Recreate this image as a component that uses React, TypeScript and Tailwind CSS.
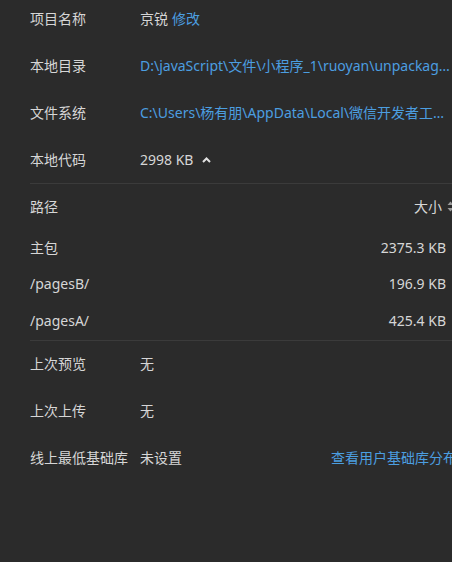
import React from "react";

const font = { fontFamily: '"Noto Sans", "Noto Sans CJK SC", sans-serif' };

function Row({ label, children }: { label: string; children?: React.ReactNode }) {
  return (
    <div className="flex h-[47px] items-center">
      <div className="w-[110px] shrink-0 text-[#d6d6d6]">{label}</div>
      <div className="flex min-w-0 flex-1 items-center">{children}</div>
    </div>
  );
}

function SizeRow({ path, size }: { path: string; size: string }) {
  return (
    <div className="flex h-[36.5px] items-center justify-between pr-[14px] text-[#d6d6d6]">
      <span>{path}</span>
      <span>{size}</span>
    </div>
  );
}

export default function App() {
  return (
    <div className="h-[562px] w-[452px] overflow-hidden bg-[#2b2b2b] text-[14px]" style={font}>
      <div className="-mt-[5px] w-[460px] pl-[30px]">
        <Row label="项目名称">
          <span className="text-[#d6d6d6]">京锐</span>
          <span className="ml-[4px] text-[#4c9ee0]">修改</span>
        </Row>
        <Row label="本地目录">
          <span className="block w-[311px] truncate text-[#4c9ee0]">
            D:\javaScript\文件\小程序_1\ruoyan\unpackage\dist\dev\mp-weixin
          </span>
        </Row>
        <Row label="文件系统">
          <span className="block w-[305px] truncate text-[#4c9ee0]">
            C:\Users\杨有朋\AppData\Local\微信开发者工具\User Data
          </span>
        </Row>
        <Row label="本地代码">
          <span className="text-[#d6d6d6]">2998 KB</span>
          <svg className="ml-[9px]" width="9" height="6" viewBox="0 0 9 6">
            <path d="M1 5 L4.5 1.5 L8 5" fill="none" stroke="#e0e0e0" strokeWidth="2" />
          </svg>
        </Row>
        <div className="h-px bg-[#3b3b3b]" />
        <div className="flex h-[45px] items-center justify-between pr-[6px] text-[#d6d6d6]">
          <span>路径</span>
          <span className="flex items-center gap-[5px]">
            大小
            <svg width="7" height="11" viewBox="0 0 7 11">
              <path d="M3.5 0.5 L6.5 4 L0.5 4 Z" fill="#9a9a9a" />
              <path d="M3.5 10.5 L6.5 7 L0.5 7 Z" fill="#9a9a9a" />
            </svg>
          </span>
        </div>
        <SizeRow path="主包" size="2375.3 KB" />
        <SizeRow path="/pagesB/" size="196.9 KB" />
        <SizeRow path="/pagesA/" size="425.4 KB" />
        <div className="mt-[1px] h-px bg-[#3b3b3b]" />
        <div className="-mt-[1px]">
          <Row label="上次预览">
            <span className="text-[#d6d6d6]">无</span>
          </Row>
          <Row label="上次上传">
            <span className="text-[#d6d6d6]">无</span>
          </Row>
          <Row label="线上最低基础库">
            <span className="text-[#d6d6d6]">未设置</span>
            <span className="ml-auto mr-[3px] whitespace-nowrap text-[#4c9ee0]">查看用户基础库分布</span>
          </Row>
        </div>
      </div>
    </div>
  );
}
